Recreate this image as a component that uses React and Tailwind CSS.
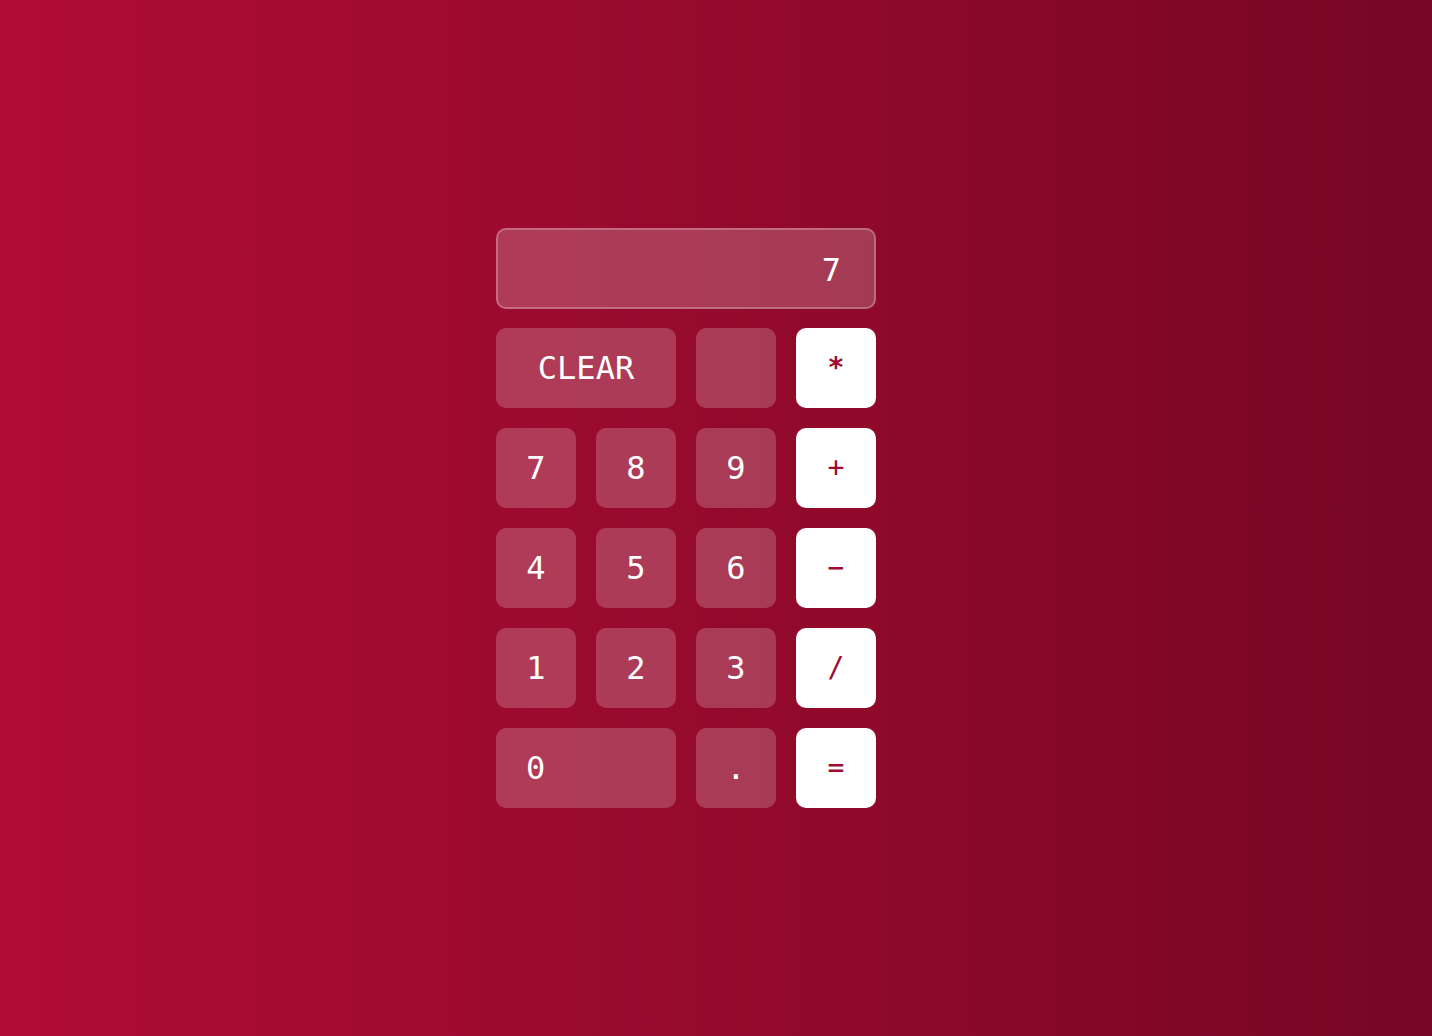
export default function App() {
  const num = "h-20 rounded-[10px] bg-white/20 text-white text-[32px] flex items-center justify-center";
  const op = "h-20 rounded-[10px] bg-white text-[#a00a30] text-[28px] flex items-center justify-center";
  return (
    <div
      className="w-full h-[1036px] bg-gradient-to-r from-[#b00c36] via-[#950a2c] to-[#760624] flex justify-center items-center"
      style={{ fontFamily: '"DejaVu Sans Mono", monospace' }}
    >
      <div className="w-[440px]">
        <div className="w-[380px] flex flex-col gap-[19px]">
          <div className="h-[81px] rounded-[10px] border-2 border-white/25 bg-white/20 text-white text-[32px] flex items-center justify-end pr-[33px] pt-[2px]">
            7
          </div>
          <div className="grid grid-cols-4 gap-5">
            <div className={num + " col-span-2"}>CLEAR</div>
            <div className={num}></div>
            <div className={op + " font-bold"}>*</div>
            <div className={num}>7</div>
            <div className={num}>8</div>
            <div className={num}>9</div>
            <div className={op}>+</div>
            <div className={num}>4</div>
            <div className={num}>5</div>
            <div className={num}>6</div>
            <div className={op}>−</div>
            <div className={num}>1</div>
            <div className={num}>2</div>
            <div className={num}>3</div>
            <div className={op}>/</div>
            <div className="h-20 rounded-[10px] bg-white/20 text-white text-[32px] flex items-center justify-start pl-[30px] col-span-2">0</div>
            <div className={num}>.</div>
            <div className={op}>=</div>
          </div>
        </div>
      </div>
    </div>
  );
}
